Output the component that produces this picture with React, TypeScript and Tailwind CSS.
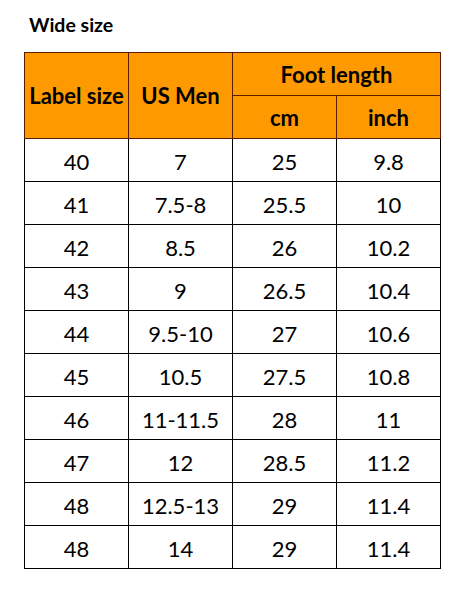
const rows: [string, string, string, string][] = [
  ["40", "7", "25", "9.8"],
  ["41", "7.5-8", "25.5", "10"],
  ["42", "8.5", "26", "10.2"],
  ["43", "9", "26.5", "10.4"],
  ["44", "9.5-10", "27", "10.6"],
  ["45", "10.5", "27.5", "10.8"],
  ["46", "11-11.5", "28", "11"],
  ["47", "12", "28.5", "11.2"],
  ["48", "12.5-13", "29", "11.4"],
  ["48", "14", "29", "11.4"],
];

const head = "border border-[#5a1c00] bg-[#ff9900] font-bold text-[22px] text-center align-middle whitespace-nowrap px-0";
const cell = "border border-black text-[22px] text-center align-middle h-[43px] pt-[2px]";

export default function App() {
  return (
    <div className="w-[460px] h-[592px] bg-white pl-[24px] pt-[13px] text-black font-['Lato',sans-serif]">
      <h1 className="pl-[5px] text-[19.5px] leading-[23px] font-bold mb-[16px]">Wide size</h1>
      <table className="w-[417px] table-fixed border-collapse">
        <thead>
          <tr className="h-[43px]">
            <th rowSpan={2} className={head}>Label size</th>
            <th rowSpan={2} className={head}>US Men</th>
            <th colSpan={2} className={head}>Foot length</th>
          </tr>
          <tr className="h-[43px]">
            <th className={head}>cm</th>
            <th className={head}>inch</th>
          </tr>
        </thead>
        <tbody>
          {rows.map((r, i) => (
            <tr key={i}>
              {r.map((v, j) => (
                <td key={j} className={cell}>{v}</td>
              ))}
            </tr>
          ))}
        </tbody>
      </table>
    </div>
  );
}
